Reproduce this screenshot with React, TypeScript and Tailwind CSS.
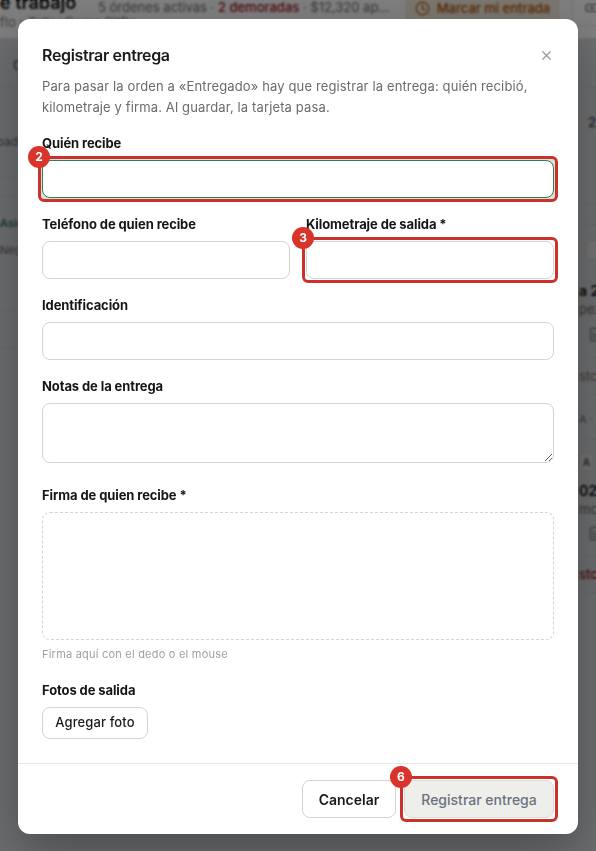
import type { ReactNode } from "react";
import { Banknote, Clock, FileText, X } from "lucide-react";

const font = "font-['Inter','Liberation_Sans',sans-serif]";

function Badge({ n }: { n: number }) {
  return (
    <span className="absolute -left-[13px] -top-[13px] z-10 flex h-[22px] w-[22px] items-center justify-center rounded-full bg-[#d9342b] text-[12px] font-bold leading-none text-white">
      {n}
    </span>
  );
}

// red guide box, sits 4px outside the field it marks
function Highlight({ n, tint, children }: { n: number; tint?: boolean; children: ReactNode }) {
  return (
    <div className={tint ? "relative -m-[4px] rounded-[6px] border-[3px] border-[#c9332b] bg-[#d8e2d6] p-[1px]" : "relative -m-[4px] rounded-[6px] border-[3px] border-[#c9332b] p-[1px]"}>
      <Badge n={n} />
      {children}
    </div>
  );
}

function Label({ children }: { children: ReactNode }) {
  return <label className="mb-[7px] block text-[13px] font-[650] leading-[20px] tracking-[-0.1px] text-[#161616]">{children}</label>;
}

function Input({ focused }: { focused?: boolean }) {
  return (
    <div
      className={
        focused
          ? "h-[38px] rounded-[8px] border border-[#2f7d5b] bg-white"
          : "h-[38px] rounded-[8px] border border-[#d4d4d4] bg-white"
      }
    />
  );
}

function LeftStrip() {
  return (
    <div className="flex w-[18px] shrink-0 flex-col overflow-hidden text-[12px] leading-[18px]">
      <div className="flex h-[50px] items-center border-b border-[#cdd0d3] pl-[13px] pt-[4px] text-[13px] text-[#444]">Cliente</div>
      <div className="flex h-[89px] justify-end whitespace-nowrap border-b border-[#cdd0d3] pt-[45px] text-[#666]">Workload</div>
      <div className="h-[20px] border-b border-[#cdd0d3]" />
      <div className="h-[114px] whitespace-nowrap border-b border-[#cdd0d3] pt-[17px] text-[11px]">
        <div className="font-medium text-[#1c6b4a]">Asignar</div>
        <div className="mt-[9px] text-[#666]">Negocio</div>
      </div>
      <div className="h-[37px] border-b border-[#cdd0d3]" />
    </div>
  );
}

function RightStrip() {
  return (
    <div className="flex w-[18px] shrink-0 flex-col overflow-hidden whitespace-nowrap text-[13px] leading-[18px]">
      <div className="h-[50px] border-b border-[#cdd0d3]" />
      <div className="h-[117px] border-b border-[#cdd0d3] pl-[10px] pt-[25px] text-[#222]">2</div>
      <div className="h-[20px] border-b border-[#cdd0d3]" />
      <div className="h-[133px] border-b border-[#cdd0d3] pl-[1px]">
        <div className="mt-[15px] ml-[6px] h-[20px] w-[12px] rounded-l-[6px] border border-[#cfcfcf] bg-[#e6e6e6]" />
        <div className="mt-[22px] text-[14px] font-semibold text-[#111]">a 2022</div>
        <div className="text-[#666]">pez</div>
        <FileText className="ml-[9px] mt-[9px] h-[15px] w-[15px] text-[#777]" />
      </div>
      <div className="h-[37px] border-b border-[#cdd0d3] pl-[1px] pt-[9px] text-[#777]">sto</div>
      <div className="h-[45px] border-b border-[#cdd0d3] pl-[1px] pt-[15px] text-[11px] text-[#777]">A ·</div>
      <div className="h-[116px] border-b border-[#cdd0d3] pl-[1px]">
        <div className="mt-[12px] flex h-[20px] w-[15px] items-center justify-center rounded-[4px] border border-[#cfcfcf] bg-[#e6e6e6] text-[10px] font-semibold text-[#555]">A</div>
        <div className="mt-[10px] text-[14px] font-semibold text-[#111]">022</div>
        <div className="text-[#666]">mo</div>
        <FileText className="ml-[9px] mt-[8px] h-[15px] w-[15px] text-[#777]" />
      </div>
      <div className="h-[37px] border-b border-[#cdd0d3] pl-[1px] pt-[9px] font-medium text-[#a3172a]">sto</div>
    </div>
  );
}

export default function App() {
  return (
    <div className={`${font} relative h-[851px] w-[596px] overflow-hidden bg-[#dadde0]`}>
      {/* Page behind the dialog */}
      <div className="flex h-[38px] items-start bg-white text-[14px] leading-[20px] text-[#777]">
        <div className="-mt-[9px] w-[98px] shrink-0 whitespace-nowrap">
          <div className="text-[18px] font-semibold leading-[24px] text-[#111]">e trabajo</div>
          <div className="text-[13px] leading-[14px] text-[#888]">flo › Taller Demo Pitflo</div>
        </div>
        <div className="-mt-[3px] w-[308px] shrink-0 whitespace-nowrap text-[13px]">
          5 órdenes activas · <span className="font-medium text-[#a3172a]">2 demoradas</span> · $12,320 ap...
        </div>
        <div className="-mt-[10px] flex h-[36px] w-[153px] shrink-0 items-center justify-center gap-[7px] rounded-[6px] border border-[#eadfca] bg-[#f7efe0] text-[13px] font-medium text-[#b45309]">
          <Clock className="h-[15px] w-[15px]" />
          Marcar mi entrada
        </div>
        <div className="-mt-[10px] ml-[13px] flex h-[36px] flex-1 items-center rounded-l-[6px] border border-[#e5e5e5] pl-[12px] text-[#666]">
          <Banknote className="h-[14px] w-[14px] shrink-0" />
        </div>
      </div>
      <div className="flex justify-between">
        <LeftStrip />
        <RightStrip />
      </div>

      {/* Overlay */}
      <div className="absolute inset-0 bg-black/50 backdrop-blur-[1px]" />

      {/* Dialog */}
      <div className="absolute left-[18px] top-[19px] flex h-[815px] w-[560px] flex-col rounded-[12px] bg-white shadow-[0_20px_50px_rgba(0,0,0,0.3)]">
        <div className="flex-1 px-[24px] pt-[24px]">
          <div className="flex items-center justify-between">
            <h2 className="text-[16px] font-semibold leading-[24px] tracking-[-0.35px] text-[#1a1a1a]">Registrar entrega</h2>
            <X className="h-[15px] w-[15px] text-[#9a9a9a]" />
          </div>
          <p className="mt-[9px] text-[13px] leading-[21px] tracking-[0.13px] text-[#6b6b6b]">
            Para pasar la orden a «Entregado» hay que registrar la entrega: quién recibió, kilometraje y firma. Al guardar, la tarjeta pasa.
          </p>

          <div className="mt-[15px]">
            <Label>Quién recibe</Label>
            <Highlight n={2} tint>
              <Input focused />
            </Highlight>
          </div>

          <div className="mt-[16px] grid grid-cols-2 gap-[16px]">
            <div>
              <Label>Teléfono de quien recibe</Label>
              <Input />
            </div>
            <div>
              <Label>Kilometraje de salida *</Label>
              <Highlight n={3}>
                <Input />
              </Highlight>
            </div>
          </div>

          <div className="mt-[16px]">
            <Label>Identificación</Label>
            <Input />
          </div>

          <div className="mt-[16px]">
            <Label>Notas de la entrega</Label>
            <textarea className="block h-[60px] w-full rounded-[8px] border border-[#d4d4d4] bg-white" />
          </div>

          <div className="mt-[22px]">
            <Label>Firma de quien recibe *</Label>
            <div className="h-[128px] rounded-[8px] border border-dashed border-[#d4d4d4]" />
            <p className="mt-[7px] text-[11px] leading-[14px] tracking-[0.22px] text-[#a0a0a0]">Firma aquí con el dedo o el mouse</p>
          </div>

          <div className="mt-[19px]">
            <Label>Fotos de salida</Label>
            <button className="h-[32px] w-[106px] rounded-[8px] border border-[#d4d4d4] text-[13px] font-medium tracking-[0.1px] text-[#1a1a1a]">Agregar foto</button>
          </div>
        </div>

        <div className="flex h-[71px] items-center justify-end gap-[8px] border-t border-[#e8e8e8] px-[24px]">
          <button className="h-[38px] w-[94px] rounded-[8px] border border-[#d4d4d4] text-[14px] font-semibold text-[#1a1a1a]">Cancelar</button>
          <Highlight n={6}>
            <button className="block h-[38px] w-[150px] rounded-[8px] border border-[#dcdcd6] bg-[#eeeeea] text-[14px] font-medium text-[#6b7280]">Registrar entrega</button>
          </Highlight>
        </div>
      </div>
    </div>
  );
}
